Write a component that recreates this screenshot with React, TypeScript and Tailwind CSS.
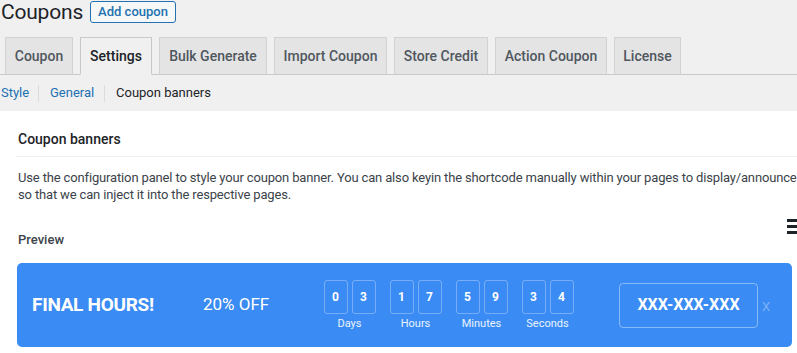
import React from "react";

const tabs = [
  { label: "Coupon", w: "w-[68px]" },
  { label: "Settings", w: "w-[72px]", active: true },
  { label: "Bulk Generate", w: "w-[108px]" },
  { label: "Import Coupon", w: "w-[113px]" },
  { label: "Store Credit", w: "w-[94px]" },
  { label: "Action Coupon", w: "w-[112px]" },
  { label: "License", w: "w-[67px]" },
];

const timer = [
  { d: ["0", "3"], l: "Days" },
  { d: ["1", "7"], l: "Hours" },
  { d: ["5", "9"], l: "Minutes" },
  { d: ["3", "4"], l: "Seconds" },
];

export default function App() {
  return (
    <div
      className="w-[797px] h-[353px] overflow-hidden bg-[#f0f0f1] text-[#3c434a]"
      style={{ fontFamily: "Roboto, 'Noto Sans', 'Liberation Sans', sans-serif" }}
    >
      {/* Header */}
      <div className="flex items-center h-[24px]">
        <h1 className="w-[90px] pl-[1px] text-[21px] leading-[24px] font-normal text-[#1d2327] tracking-[-0.2px]">
          Coupons
        </h1>
        <button className="w-[86px] h-[22px] mt-[-1px] border border-[#2271b1] rounded-[3px] bg-[#f6f7f7] text-[13px] leading-[20px] font-medium text-[#2271b1]">
          Add coupon
        </button>
      </div>

      {/* Tabs */}
      <div className="mt-[12px] h-[39px] flex items-end gap-[7px] pl-[5px] border-b border-[#c9c9cb]">
        {tabs.map((t) => (
          <div
            key={t.label}
            className={`${t.w} h-[38px] -mb-px flex items-center justify-center border text-[14px] font-medium ${
              t.active
                ? "bg-[#f0f0f1] border-[#c9c9cb] border-b-[#f0f0f1] text-[#1d2327]"
                : "bg-[#e4e4e5] border-[#d2d2d4] border-b-[#c9c9cb] text-[#50575e]"
            }`}
          >
            {t.label}
          </div>
        ))}
      </div>

      {/* Sub nav */}
      <div className="mt-[9px] h-[18px] flex items-center text-[13px]">
        <span className="w-[38px] pl-[1px] text-[#2271b1]">Style</span>
        <span className="w-px h-[17px] bg-[#dcdcde]" />
        <span className="w-[65px] pl-[11px] text-[#2271b1]">General</span>
        <span className="w-px h-[17px] bg-[#dcdcde]" />
        <span className="pl-[11px] text-[#1d2327]">Coupon banners</span>
      </div>

      {/* Panel */}
      <div className="mt-[9px] bg-white pl-[18px] h-[260px]">
        <h2 className="pt-[18px] text-[14px] leading-[20px] font-medium text-[#1d2327]">
          Coupon banners
        </h2>
        <div className="mt-[7px] ml-[-2px] h-px bg-[#efeff0]" />
        <p className="mt-[12px] text-[13px] leading-[17px] whitespace-nowrap tracking-[-0.15px] text-[#3c434a]">
          Use the configuration panel to style your coupon banner. You can also keyin the shortcode manually within your pages to display/announce the
          <br />
          so that we can inject it into the respective pages.
        </p>

        <div className="mt-[15px] flex justify-between items-start">
          <div className="pt-[12px] text-[13px] leading-[20px] font-medium text-[#3c434a]">
            Preview
          </div>
          <svg width="16" height="16" viewBox="0 0 16 16" className="mr-[-6px] shrink-0">
            <rect x="0" y="1" width="16" height="3" fill="#1d2327" />
            <rect x="0" y="7" width="16" height="3" fill="#1d2327" />
            <rect x="0" y="13" width="16" height="3" fill="#1d2327" />
          </svg>
        </div>

        {/* Banner */}
        <div className="mt-[13px] ml-[-1px] w-[775px] h-[84px] rounded-[5px] bg-[#3a8bf3] flex items-center pl-[15px] text-white">
          <div className="w-[171px] shrink-0 text-[19px] font-bold tracking-[-0.3px]">FINAL HOURS!</div>
          <div className="w-[120px] shrink-0 text-[17px] font-normal">20% OFF</div>
          <div className="flex gap-[13px] shrink-0">
            {timer.map((g) => (
              <div key={g.l} className="w-[53px] flex flex-col items-center">
                <div className="flex gap-[4px]">
                  {g.d.map((n, i) => (
                    <div
                      key={i}
                      className="w-[24px] h-[34px] border border-white/30 rounded-[3px] flex items-center justify-center text-[12px] font-bold"
                    >
                      {n}
                    </div>
                  ))}
                </div>
                <div className="mt-[3px] text-[11px] leading-[14px] text-white/90">{g.l}</div>
              </div>
            ))}
          </div>
          <div className="ml-[45px] w-[139px] h-[45px] shrink-0 border border-white/40 rounded-[4px] flex items-center justify-center text-[16px] font-bold">
            XXX-XXX-XXX
          </div>
          <div className="ml-[4px] text-[17px] leading-[20px] font-light text-white/40">x</div>
        </div>
      </div>
    </div>
  );
}
